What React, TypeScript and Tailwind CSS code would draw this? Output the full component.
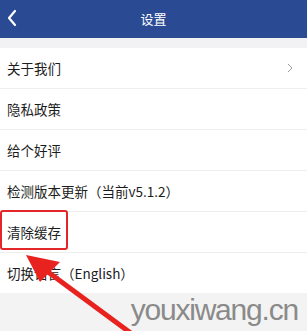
import React from "react";

const rows = [
  { label: "关于我们", arrow: true },
  { label: "隐私政策" },
  { label: "给个好评" },
  { label: "检测版本更新（当前v5.1.2）" },
  { label: "清除缓存" },
  { label: "切换语言（English）" },
];

export default function App() {
  return (
    <div
      className="relative w-[307px] h-[331px] overflow-hidden bg-[#f3f3f3]"
      style={{ fontFamily: '"Noto Sans CJK SC", "Noto Sans", sans-serif' }}
    >
      <div className="h-[38px] bg-[#2a4b94] flex items-center justify-center relative">
        <svg className="absolute left-[7px] top-[9px]" width="10" height="18" viewBox="0 0 10 18">
          <path d="M8 2 L2 9 L8 16" stroke="#ffffff" strokeWidth="2.2" fill="none" strokeLinecap="round" strokeLinejoin="round" />
        </svg>
        <span className="text-white text-[13px] leading-none -mt-[2px]">设置</span>
      </div>
      <div className="h-[10px] bg-[#f2f2f4]" />
      <div className="bg-white">
        {rows.map((r, i) => (
          <div
            key={i}
            className={`flex items-center justify-between pl-[7px] pr-[14px] text-[13.5px] text-[#1c1c1c] ${
              i < rows.length - 1 ? "h-[41px] border-b border-[#eeeeee]" : "h-[40px]"
            }`}
          >
            <span>{r.label}</span>
            {r.arrow && (
              <svg width="6" height="10" viewBox="0 0 6 10">
                <path d="M1 1 L5 5 L1 9" stroke="#9a9a9a" strokeWidth="1" fill="none" />
              </svg>
            )}
          </div>
        ))}
      </div>
      <div className="flex justify-end pr-[9px] pt-[2px]">
        <span
          className="text-[30px] leading-none text-[#8a8a8a] tracking-[-1.2px]"
          style={{ fontFamily: '"Liberation Sans", Arial, sans-serif' }}
        >
          youxiwang.cn
        </span>
      </div>
      <div className="absolute left-0 top-[210px] w-[68px] h-[40px] border-[2.5px] border-[#e3262a] rounded-[3px]" />
      <svg className="absolute left-0 top-0" width="307" height="331" viewBox="0 0 307 331">
        <line x1="132" y1="334" x2="44" y2="269" stroke="#e8231f" strokeWidth="5" />
        <polygon points="26,255 60,262 40,282" fill="#e8231f" />
      </svg>
    </div>
  );
}
